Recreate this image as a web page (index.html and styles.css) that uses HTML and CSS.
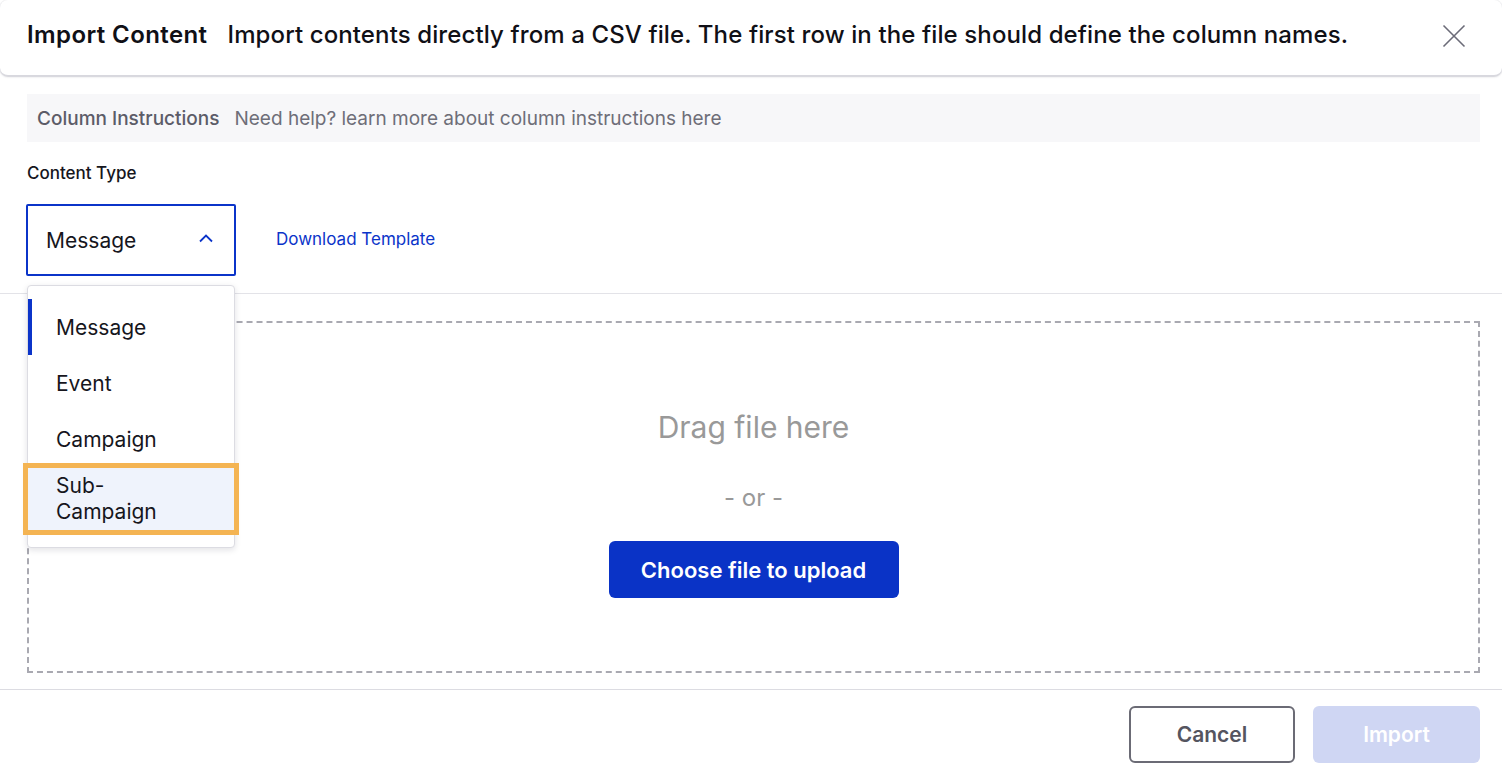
FILE: index.html
```html
<!DOCTYPE html>
<html lang="en">
<head>
<meta charset="utf-8">
<title>Import Content</title>
<link rel="stylesheet" href="styles.css">
</head>
<body>
<div class="modal">
  <header class="header">
    <h1 class="title">Import Content</h1>
    <p class="subtitle">Import contents directly from a CSV file. The first row in the file should define the column names.</p>
    <button class="close" aria-label="Close">
      <svg width="24" height="24" viewBox="0 0 24 24"><path d="M1.5 1.5L22.5 22.5M22.5 1.5L1.5 22.5" stroke="#6b6b78" stroke-width="1.6" fill="none"/></svg>
    </button>
  </header>

  <section class="top">
    <div class="instructions">
      <span class="instr-title">Column Instructions</span>
      <span class="instr-text">Need help? learn more about column instructions here</span>
    </div>
    <div class="label">Content Type</div>
    <div class="type-row">
      <div class="select-wrap">
        <div class="select">
          <span>Message</span>
          <svg class="chev" width="14" height="9" viewBox="0 0 14 9"><path d="M1 7.5L7 1.5L13 7.5" stroke="#0b34c9" stroke-width="1.8" fill="none"/></svg>
        </div>
        <ul class="menu">
          <li class="item selected">Message</li>
          <li class="item">Event</li>
          <li class="item">Campaign</li>
          <li class="item focused"><span class="wrap">Sub-Campaign</span></li>
        </ul>
      </div>
      <a class="link" href="#">Download Template</a>
    </div>
  </section>

  <section class="drop-section">
    <div class="dropzone">
      <div class="drag">Drag file here</div>
      <div class="or">- or -</div>
      <button class="primary">Choose file to upload</button>
    </div>
  </section>

  <footer class="footer">
    <button class="cancel">Cancel</button>
    <button class="import">Import</button>
  </footer>
</div>
</body>
</html>
```

FILE: styles.css
```css
* { box-sizing: border-box; }
html, body { margin: 0; padding: 0; background: #fff; }
body {
  font-family: Inter, "Noto Sans", "Liberation Sans", sans-serif;
  color: #16161d;
  width: 1502px;
  height: 772px;
  overflow: hidden;
}
.modal { display: flex; flex-direction: column; }

.header {
  height: 76px;
  display: flex;
  align-items: center;
  padding: 0 36px 7px 27px;
  border-radius: 8px;
  box-shadow: 0 1px 2px rgba(30, 30, 60, 0.18), 0 0 0 1px rgba(30,30,60,0.04);
  border-bottom: 1px solid #d8d8de;
  background: #fff;
}
.title {
  margin: 0;
  font-size: 24px;
  font-weight: 600;
  letter-spacing: 0.4px;
  color: #101016;
  white-space: nowrap;
}
.subtitle {
  margin: 0 0 0 20px;
  font-size: 24px;
  font-weight: 500;
  letter-spacing: 0.11px;
  color: #101016;
  white-space: nowrap;
  flex: 1;
}
.close {
  border: 0;
  background: none;
  padding: 0;
  width: 24px;
  height: 24px;
  margin-top: 3px;
  display: flex;
}

.top { padding: 18px 22px 0 27px; }
.instructions {
  height: 48px;
  background: #f7f7f9;
  display: flex;
  align-items: center;
  padding-left: 10px;
  font-size: 19px;
}
.instr-title { color: #5c5c68; font-weight: 500; }
.instr-text { color: #6e6e78; margin-left: 15px; }

.label {
  margin-top: 21px;
  font-size: 17px;
  line-height: 20px;
  font-weight: 500;
  color: #16161d;
}
.type-row {
  margin-top: 21px;
  display: flex;
  align-items: center;
  gap: 40px;
  padding-bottom: 17px;
}
.select-wrap { position: relative; margin-left: -1px; }
.select {
  width: 210px;
  height: 72px;
  border: 2px solid #0b34c9;
  border-radius: 2px;
  display: flex;
  align-items: center;
  justify-content: space-between;
  padding: 0 21px 0 18px;
  font-size: 21px;
  color: #16161d;
}
.chev { margin-bottom: 3px; }
.link {
  color: #0b34c9;
  font-size: 17px;
  text-decoration: none;
  margin-bottom: 3px;
}

.menu {
  position: absolute;
  top: 81px;
  left: 1px;
  width: 208px;
  margin: 0;
  padding: 13px 0 17px;
  list-style: none;
  background: #fff;
  border: 1px solid #dcdce2;
  border-radius: 4px;
  box-shadow: 0 2px 6px rgba(20, 20, 40, 0.12);
  z-index: 5;
}
.item {
  height: 56px;
  display: flex;
  align-items: center;
  padding-left: 28px;
  font-size: 21px;
  color: #16161d;
}
.item.selected { box-shadow: inset 4px 0 0 #0b34c9; }
.item.focused {
  height: 62px;
  margin-top: 1px;
  background: #eff3fc;
  outline: 5px solid #f4b453;
  line-height: 26px;
}
.wrap { display: block; max-width: 120px; }

.drop-section {
  border-top: 1px solid #e3e3e8;
  padding: 27px 22px 16px 27px;
  border-bottom: 1px solid #dcdce2;
}
.dropzone {
  height: 352px;
  border: 2px dashed #a9a9b1;
  display: flex;
  flex-direction: column;
  align-items: center;
  padding-top: 86px;
}
.drag {
  font-size: 30px;
  line-height: 36px;
  color: #999;
}
.or {
  margin-top: 39px;
  font-size: 24px;
  line-height: 28px;
  color: #999;
}
.primary {
  margin-top: 29px;
  width: 290px;
  height: 57px;
  border: 0;
  border-radius: 6px;
  background: #0a33c6;
  color: #fff;
  font-family: inherit;
  font-size: 22px;
  font-weight: 600;
}

.footer {
  display: flex;
  justify-content: flex-end;
  gap: 18px;
  padding: 16px 22px 0 0;
}
.cancel, .import {
  height: 57px;
  border-radius: 6px;
  font-family: inherit;
  font-size: 21px;
  font-weight: 600;
}
.cancel {
  width: 166px;
  background: #fff;
  border: 2px solid #6b6b75;
  color: #55555f;
}
.import {
  width: 167px;
  border: 0;
  background: #cfd6f3;
  color: #fff;
}
```
